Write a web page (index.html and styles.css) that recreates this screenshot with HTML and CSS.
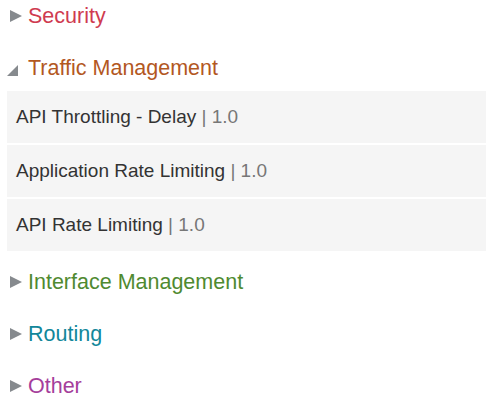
FILE: index.html
```html
<!DOCTYPE html>
<html lang="en">
<head>
    <meta charset="UTF-8">
    <title>Policies</title>
    <link rel="stylesheet" href="styles.css">
</head>
<body>
    <div class="group security">
        <div class="group-title"><span class="arrow"></span>Security</div>
    </div>

    <div class="group traffic open">
        <div class="group-title"><span class="arrow"></span>Traffic Management</div>
        <ul class="policy-list">
            <li>API Throttling - Delay <span class="version">| 1.0</span></li>
            <li>Application Rate Limiting <span class="version">| 1.0</span></li>
            <li>API Rate Limiting <span class="version">| 1.0</span></li>
        </ul>
    </div>

    <div class="group interface">
        <div class="group-title"><span class="arrow"></span>Interface Management</div>
    </div>

    <div class="group routing">
        <div class="group-title"><span class="arrow"></span>Routing</div>
    </div>

    <div class="group other">
        <div class="group-title"><span class="arrow"></span>Other</div>
    </div>
</body>
</html>
```

FILE: styles.css
```css
body {
    margin: 0;
    padding: 1px 9px 0 7px;
    font-family: "Liberation Sans", Arial, sans-serif;
    background: #fff;
}

.group-title {
    display: flex;
    align-items: center;
    height: 30px;
    font-size: 21.5px;
    margin-bottom: 22px;
}

.arrow {
    width: 0;
    height: 0;
    margin: 0 6px 0 3px;
    border-top: 6.5px solid transparent;
    border-bottom: 6.5px solid transparent;
    border-left: 12px solid #868a8e;
}

.open .group-title {
    margin-bottom: 8px;
}

.open .arrow {
    border-top: 0;
    border-left: 11px solid transparent;
    border-bottom: 11px solid #868a8e;
    margin: 4px 10px 0 0;
}

.security .group-title { color: #cf3b50; }
.traffic .group-title { color: #b3581f; }
.interface .group-title { color: #4f8a30; }
.routing .group-title { color: #12879a; }
.other .group-title { color: #a53e9b; }

.policy-list {
    list-style: none;
    margin: 0 0 16px;
    padding: 0;
}

.policy-list li {
    background-color: #f5f5f5;
    height: 52px;
    display: flex;
    align-items: center;
    padding: 0 9px;
    font-size: 19px;
    color: #333;
    margin-bottom: 2px;
    white-space: pre;
}

.version {
    color: #777;
}
```
